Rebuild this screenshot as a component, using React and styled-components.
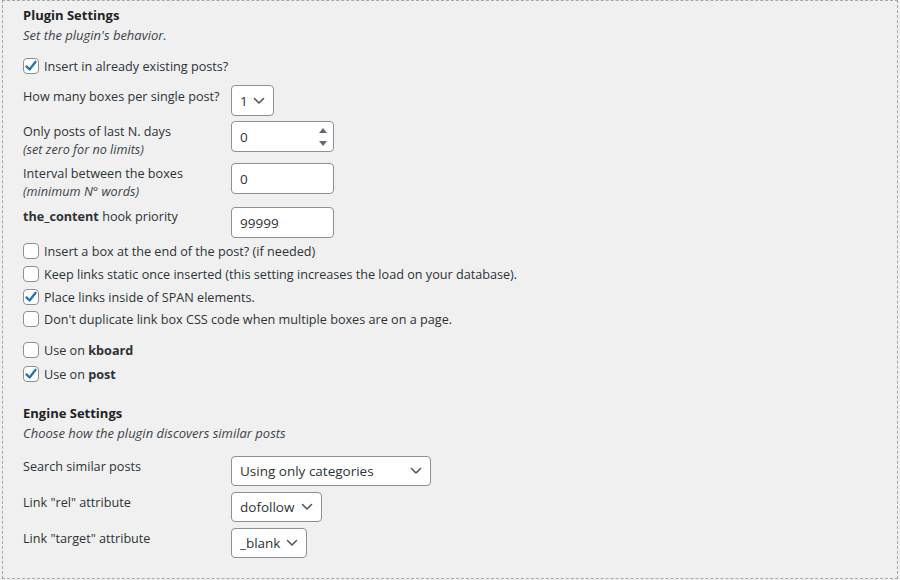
import styled, { createGlobalStyle } from 'styled-components';

const GlobalStyle = createGlobalStyle`
  html, body {
    margin: 0;
    padding: 0;
    background: #f0f0f0;
  }
  body {
    font-family: 'Open Sans', 'Noto Sans', sans-serif;
    font-size: 12.65px;
    color: #1d2327;
  }
`;

const Frame = styled.div`
  box-sizing: border-box;
  margin: 0 2px;
  height: 579px;
  border: 1px dashed #a7a7a7;
  padding: 4px 20px 0 20px;
`;

const Heading = styled.div`
  font-weight: 700;
  font-size: 13px;
  line-height: 20px;
  margin-top: ${(p) => p.$top || 0}px;
`;

const Intro = styled.div`
  font-style: italic;
  font-size: 13px;
  line-height: 20px;
  color: #3c434a;
`;

const CheckRow = styled.label`
  display: flex;
  align-items: center;
  gap: 5px;
  height: ${(p) => p.$h || 22.67}px;
  margin-top: ${(p) => p.$top || 0}px;
  color: #2c3338;
`;

const Box = styled.span`
  box-sizing: border-box;
  width: 16px;
  height: 16px;
  border: 1px solid #8c8f94;
  border-radius: 4px;
  background: #fff;
  display: inline-flex;
  align-items: center;
  justify-content: center;
  flex: none;
`;

const FieldRow = styled.div`
  display: grid;
  grid-template-columns: 208px auto;
  align-items: start;
  margin-top: ${(p) => p.$top || 0}px;
`;

const Label = styled.div`
  line-height: 18px;
  padding-top: ${(p) => p.$pad || 0}px;
  color: #2c3338;
  em {
    display: block;
    color: #3c434a;
  }
`;

const Field = styled.div`
  box-sizing: border-box;
  width: ${(p) => p.$w}px;
  height: ${(p) => p.$h || 31}px;
  border: 1px solid #8c8f94;
  border-radius: 4px;
  background: #fff;
  display: flex;
  align-items: center;
  padding: 0 8px;
  font-size: 13.5px;
  color: #2c3338;
  justify-content: space-between;
`;

const Spinner = styled.span`
  display: flex;
  flex-direction: column;
  gap: 8px;
  margin-right: -2px;
`;

const Check = () => (
  <svg width="14" height="14" viewBox="0 0 20 20">
    <path d="M3.5 10.5 L8 15 L16.5 4" fill="none" stroke="#2271b1" strokeWidth="3.2" strokeLinecap="round" strokeLinejoin="round" />
  </svg>
);

const Chevron = () => (
  <svg width="12" height="8" viewBox="0 0 12 8">
    <path d="M1.5 1.5 L6 6 L10.5 1.5" fill="none" stroke="#50575e" strokeWidth="1.6" strokeLinecap="round" strokeLinejoin="round" />
  </svg>
);

const CheckItem = ({ checked, children, top, h }) => (
  <CheckRow $top={top} $h={h}>
    <Box>{checked && <Check />}</Box>
    <span>{children}</span>
  </CheckRow>
);

const Select = ({ value, w, h }) => (
  <Field $w={w} $h={h}>
    <span>{value}</span>
    <Chevron />
  </Field>
);

export default function App() {
  return (
    <>
      <GlobalStyle />
      <Frame>
        <Heading>Plugin Settings</Heading>
        <Intro>Set the plugin's behavior.</Intro>
        <CheckItem checked top={9} h={24}>Insert in already existing posts?</CheckItem>

        <FieldRow $top={7}>
          <Label $pad={2}>How many boxes per single post?</Label>
          <Select value="1" w={43} />
        </FieldRow>
        <FieldRow $top={5}>
          <Label $pad={1}>
            Only posts of last N. days
            <em>(set zero for no limits)</em>
          </Label>
          <Field $w={103}>
            <span>0</span>
            <Spinner>
              <svg width="8" height="5" viewBox="0 0 8 5"><path d="M0 5 L4 0 L8 5 Z" fill="#646970" /></svg>
              <svg width="8" height="5" viewBox="0 0 8 5"><path d="M0 0 L4 5 L8 0 Z" fill="#646970" /></svg>
            </Spinner>
          </Field>
        </FieldRow>
        <FieldRow $top={5}>
          <Label $pad={1}>
            Interval between the boxes
            <em>(minimum N° words)</em>
          </Label>
          <Field $w={103}>0</Field>
        </FieldRow>
        <FieldRow $top={7}>
          <Label>
            <b>the_content</b> hook priority
          </Label>
          <Field $w={103}>99999</Field>
        </FieldRow>

        <CheckItem top={2}>Insert a box at the end of the post? (if needed)</CheckItem>
        <CheckItem>Keep links static once inserted (this setting increases the load on your database).</CheckItem>
        <CheckItem checked>Place links inside of SPAN elements.</CheckItem>
        <CheckItem>Don't duplicate link box CSS code when multiple boxes are on a page.</CheckItem>

        <CheckItem top={7} h={24}>Use on <b>kboard</b></CheckItem>
        <CheckItem checked h={24}>Use on <b>post</b></CheckItem>

        <Heading $top={17}>Engine Settings</Heading>
        <Intro>Choose how the plugin discovers similar posts</Intro>

        <FieldRow $top={13}>
          <Label $pad={1}>Search similar posts</Label>
          <Select value="Using only categories" w={200} h={30} />
        </FieldRow>
        <FieldRow $top={6}>
          <Label $pad={1}>Link "rel" attribute</Label>
          <Select value="dofollow" w={91} h={30} />
        </FieldRow>
        <FieldRow $top={6}>
          <Label $pad={1}>Link "target" attribute</Label>
          <Select value="_blank" w={76} h={30} />
        </FieldRow>
      </Frame>
    </>
  );
}
